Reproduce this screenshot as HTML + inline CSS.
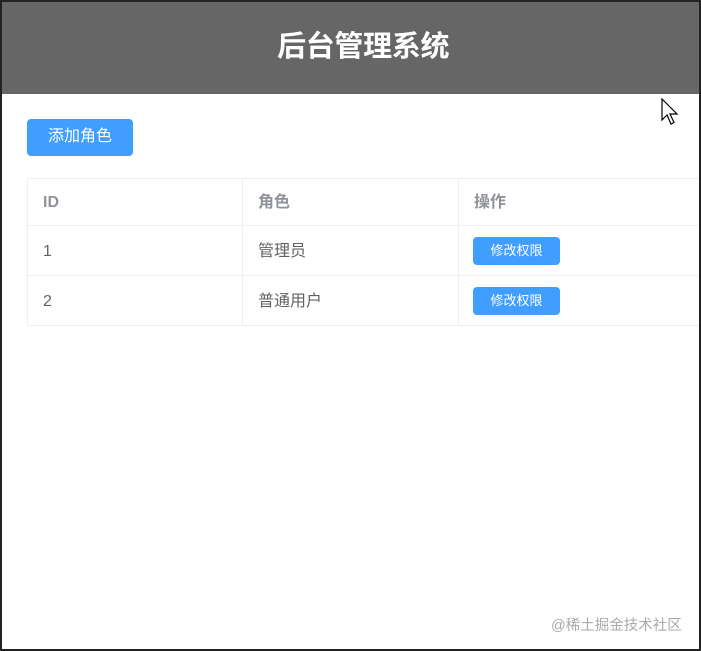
<!DOCTYPE html>
<html><head><meta charset="utf-8"><style>
*{margin:0;padding:0;box-sizing:border-box}
body{width:701px;height:651px;background:#fff;position:relative;overflow:hidden;font-family:"Liberation Sans","Noto Sans CJK SC",sans-serif}
.frame{position:absolute;left:0;top:0;width:701px;height:651px;border:2px solid #222;pointer-events:none;z-index:5}
.hdr{position:absolute;left:0;top:0;width:701px;height:94px;background:#666}
.title{position:absolute;left:277px;top:29px;font-size:29px;line-height:36px;font-weight:bold;color:#fff;letter-spacing:-0.3px}
.btn{position:absolute;background:#409eff;color:#fff;border-radius:4px;text-align:center}
.add{left:27px;top:119px;width:106px;height:37px;line-height:36px;font-size:16px}
.tbl{position:absolute;left:27px;top:178px;width:700px;height:148px;border:1px solid #ebeef5}
.h{position:absolute;height:1px;background:#ebeef5;left:27px;width:700px}
.v{position:absolute;width:1px;background:#ebeef5;top:178px;height:148px}
.t{position:absolute;font-size:16px;line-height:20px;color:#606266}
.th{color:#909399;font-weight:bold}
.sm{width:87px;height:28px;line-height:28px;font-size:13px;left:473px}
.wm{position:absolute;left:551px;top:616px;font-size:14.5px;line-height:20px;color:#aaa}
</style></head><body>
<div class="hdr"><div class="title">后台管理系统</div></div>
<div class="btn add">添加角色</div>
<div class="tbl"></div>
<div class="h" style="top:225px"></div>
<div class="h" style="top:275px"></div>
<div class="v" style="left:242px"></div>
<div class="v" style="left:458px"></div>
<div class="t th" style="left:43px;top:193px">ID</div>
<div class="t th" style="left:258px;top:193px">角色</div>
<div class="t th" style="left:474px;top:193px">操作</div>
<div class="t" style="left:43px;top:242px">1</div>
<div class="t" style="left:258px;top:242px">管理员</div>
<div class="btn sm" style="top:237px">修改权限</div>
<div class="t" style="left:43px;top:292px">2</div>
<div class="t" style="left:258px;top:292px">普通用户</div>
<div class="btn sm" style="top:287px">修改权限</div>
<svg style="position:absolute;left:661px;top:98px" width="20" height="28" viewBox="0 0 20 28"><path d="M1 1 L1 22 L6 17 L10 26 L13 24.5 L9 16 L16 16 Z" fill="#fff" stroke="#000" stroke-width="1.2"/></svg>
<div class="wm">@稀土掘金技术社区</div>
<div class="frame"></div>
</body></html>
